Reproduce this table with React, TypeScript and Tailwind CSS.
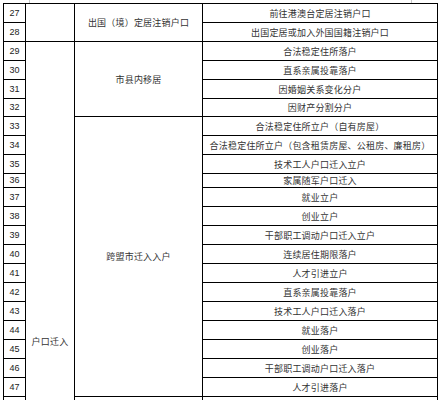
const items: { n: number; text: string }[] = [
  { n: 27, text: '前往港澳台定居注销户口' },
  { n: 28, text: '出国定居或加入外国国籍注销户口' },
  { n: 29, text: '合法稳定住所落户' },
  { n: 30, text: '直系亲属投靠落户' },
  { n: 31, text: '因婚姻关系变化分户' },
  { n: 32, text: '因财产分割分户' },
  { n: 33, text: '合法稳定住所立户（自有房屋）' },
  { n: 34, text: '合法稳定住所立户（包含租赁房屋、公租房、廉租房）' },
  { n: 35, text: '技术工人户口迁入立户' },
  { n: 36, text: '家属随军户口迁入' },
  { n: 37, text: '就业立户' },
  { n: 38, text: '创业立户' },
  { n: 39, text: '干部职工调动户口迁入立户' },
  { n: 40, text: '连续居住期限落户' },
  { n: 41, text: '人才引进立户' },
  { n: 42, text: '直系亲属投靠落户' },
  { n: 43, text: '技术工人户口迁入落户' },
  { n: 44, text: '就业落户' },
  { n: 45, text: '创业落户' },
  { n: 46, text: '干部职工调动户口迁入落户' },
  { n: 47, text: '人才引进落户' },
];

const cjk = "font-['Noto_Sans_CJK_SC','Noto_Sans',sans-serif]";

function Num({ n }: { n?: number }) {
  return (
    <div className="bg-white flex items-center justify-center font-['Liberation_Sans',Arial,sans-serif] text-[9px] leading-none text-[#222]">
      {n}
    </div>
  );
}

function Item({ text }: { text?: string }) {
  return (
    <div className={`bg-white flex items-center justify-center whitespace-nowrap text-[9px] leading-none tracking-[0.2px] text-[#333] ${cjk}`}>
      {text}
    </div>
  );
}

function Group({ span, label }: { span: string; label: string }) {
  return (
    <div className={`bg-white flex items-center justify-center text-[9px] leading-none tracking-[0.2px] text-[#333] ${cjk} ${span}`}>
      {label}
    </div>
  );
}

export default function App() {
  const row = (i: number) => items[i];

  return (
    <div className="relative w-[443px] h-[400px] overflow-hidden bg-white">
      {/* faint marks above the sheet */}
      <div className="absolute left-[29px] top-0 w-px h-[3px] bg-[#c8c8c8]" />
      <div className="absolute left-[411px] top-0 w-px h-[3px] bg-[#c8c8c8]" />

      <div className="pt-[3px] pl-[3px]">
        <div className="grid w-max bg-black p-px gap-px grid-cols-[21px_48px_127px_234px] grid-rows-[repeat(5,18px)_17px_repeat(3,18px)_13px_repeat(12,18px)]">
          {/* 27 */}
          <Num n={row(0).n} />
          <div className="bg-white row-span-2" />
          <Group span="row-span-2" label="出国（境）定居注销户口" />
          <Item text={row(0).text} />
          {/* 28 */}
          <Num n={row(1).n} />
          <Item text={row(1).text} />

          {/* 29 */}
          <Num n={row(2).n} />
          <div className={`bg-white row-span-20 flex justify-center pt-[294px] text-[9px] leading-[12px] tracking-[0.3px] text-[#333] ${cjk}`}>
            户口迁入
          </div>
          <Group span="row-span-4" label="市县内移居" />
          <Item text={row(2).text} />
          {[3, 4, 5].map((i) => (
            <div key={i} className="contents">
              <Num n={row(i).n} />
              <Item text={row(i).text} />
            </div>
          ))}

          {/* 33 */}
          <Num n={row(6).n} />
          <Group span="row-span-15" label="跨盟市迁入入户" />
          <Item text={row(6).text} />
          {items.slice(7).map((it) => (
            <div key={it.n} className="contents">
              <Num n={it.n} />
              <Item text={it.text} />
            </div>
          ))}

          {/* 48 */}
          <Num />
          <div className="bg-white" />
          <Item />
        </div>
      </div>
    </div>
  );
}
